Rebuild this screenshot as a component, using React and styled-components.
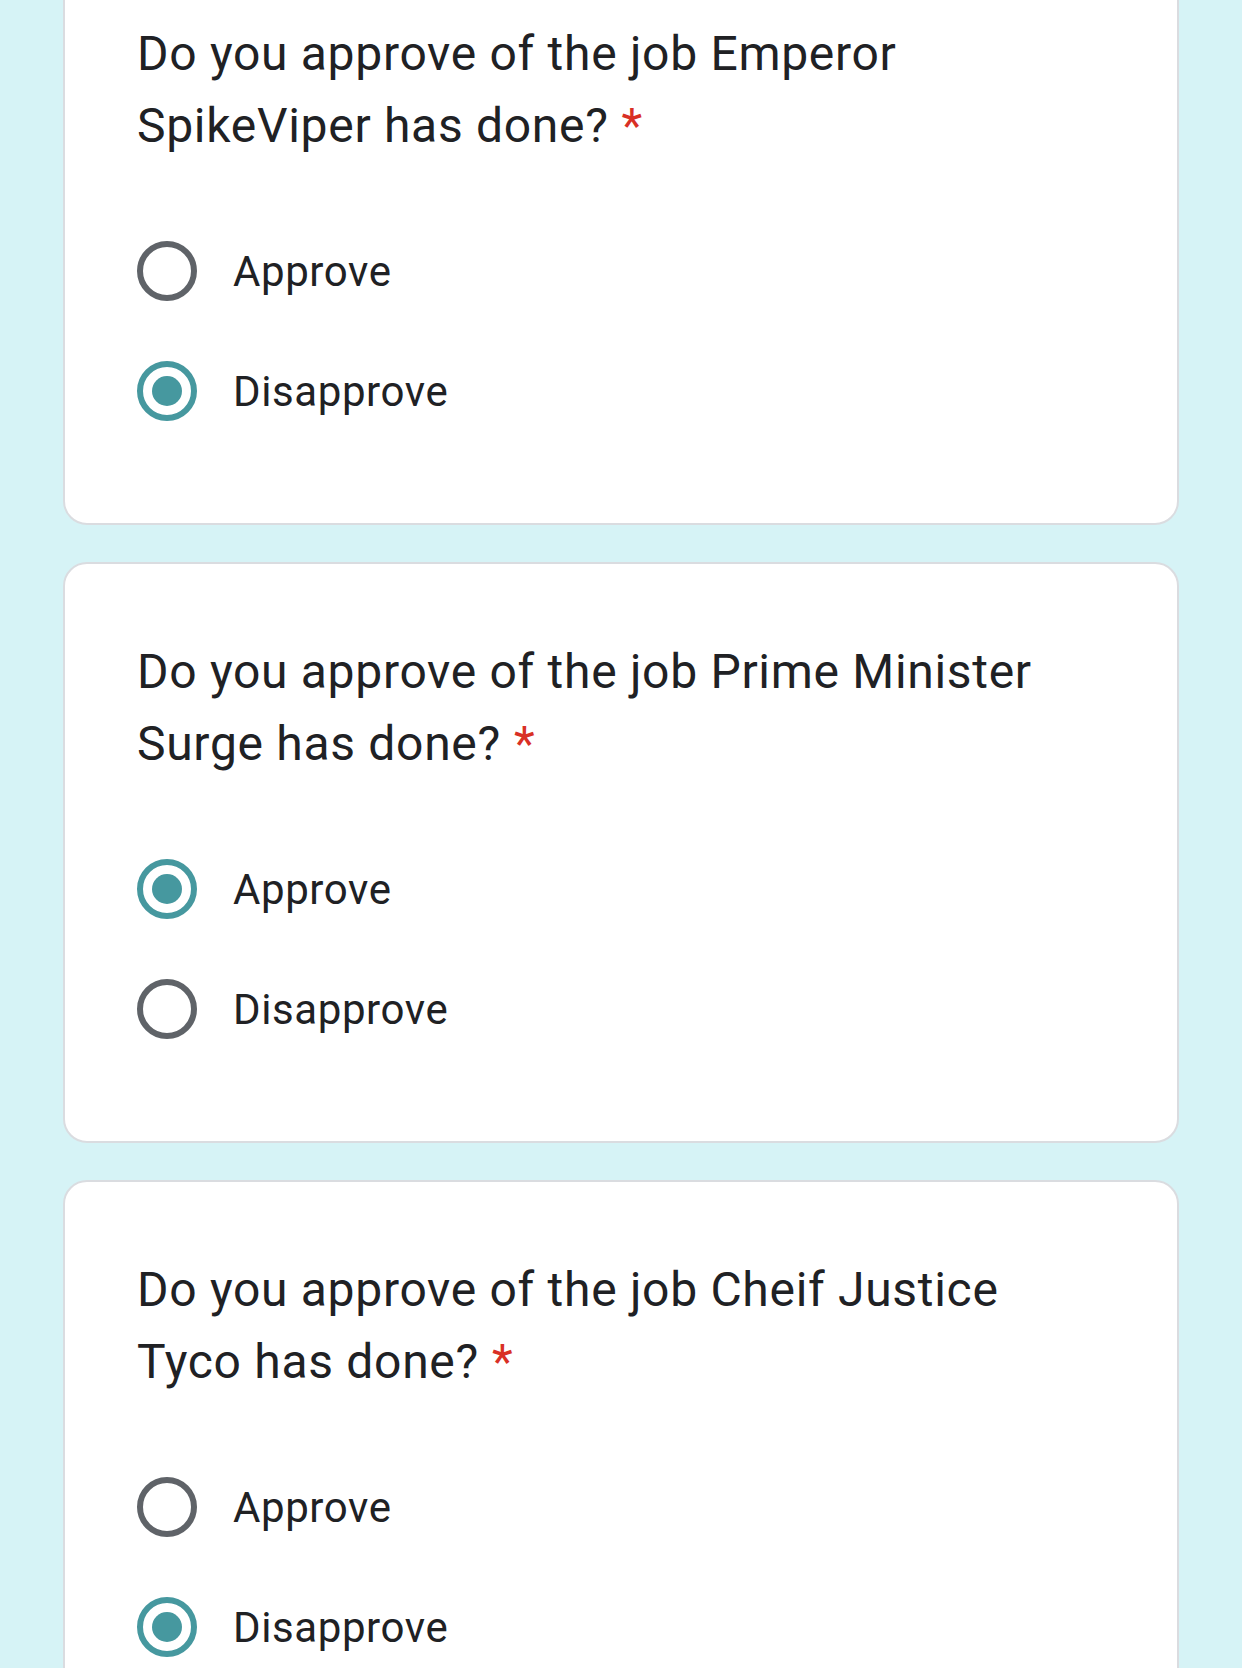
import React from 'react'
import styled, { createGlobalStyle } from 'styled-components'

const GlobalStyle = createGlobalStyle`
  html, body {
    margin: 0;
    padding: 0;
    background-color: #d6f3f6;
  }
  body {
    overflow: hidden;
  }
`;

const Page = styled.main`
  width: 1242px;
  min-height: 1668px;
  padding: 0 63px;
  box-sizing: border-box;
  display: flex;
  flex-direction: column;
  gap: 37px;
  background-color: #d6f3f6;

  & > section:first-child {
    margin-top: -56px;
  }
`;

const Card = styled.section`
  background-color: #ffffff;
  border: 2px solid #dadce0;
  border-radius: 24px;
  padding: 72px 72px 72px 72px;
  box-sizing: border-box;
`;

const Question = styled.h2`
  margin: 0 0 49px 0;
  font-family: Roboto, "Noto Sans", sans-serif;
  font-weight: 400;
  font-size: 48px;
  line-height: 72px;
  color: #202124;
  letter-spacing: 0.7px;

  .required {
    color: #d93025;
    margin-left: 13px;
  }
`;

const Options = styled.div`
  display: flex;
  flex-direction: column;
`;

const OptionRow = styled.label`
  height: 120px;
  display: flex;
  align-items: center;
  gap: 36px;
  font-family: Roboto, "Noto Sans", sans-serif;
  font-size: 42px;
  letter-spacing: 0.6px;
  color: #202124;
`;

const Radio = styled.span`
  width: 60px;
  height: 60px;
  box-sizing: border-box;
  border-radius: 50%;
  border: 6px solid ${(p) => (p.checked ? '#46989f' : '#5f6368')};
  display: flex;
  align-items: center;
  justify-content: center;
  flex-shrink: 0;

  &::after {
    content: '';
    width: 30px;
    height: 30px;
    border-radius: 50%;
    background-color: #46989f;
    display: ${(p) => (p.checked ? 'block' : 'none')};
  }
`;

const questions = [
  { text: 'Do you approve of the job Emperor SpikeViper has done?', choice: 'Disapprove' },
  { text: 'Do you approve of the job Prime Minister Surge has done?', choice: 'Approve' },
  { text: 'Do you approve of the job Cheif Justice Tyco has done?', choice: 'Disapprove' },
];

const App = () => {
  return (
    <>
      <GlobalStyle />
      <Page>
        {questions.map((q) => (
          <Card key={q.text}>
            <Question>
              {q.text}<span className='required'>*</span>
            </Question>
            <Options>
              {['Approve', 'Disapprove'].map((opt) => (
                <OptionRow key={opt}>
                  <Radio checked={q.choice === opt} />
                  {opt}
                </OptionRow>
              ))}
            </Options>
          </Card>
        ))}
      </Page>
    </>
  )
}

export default App
